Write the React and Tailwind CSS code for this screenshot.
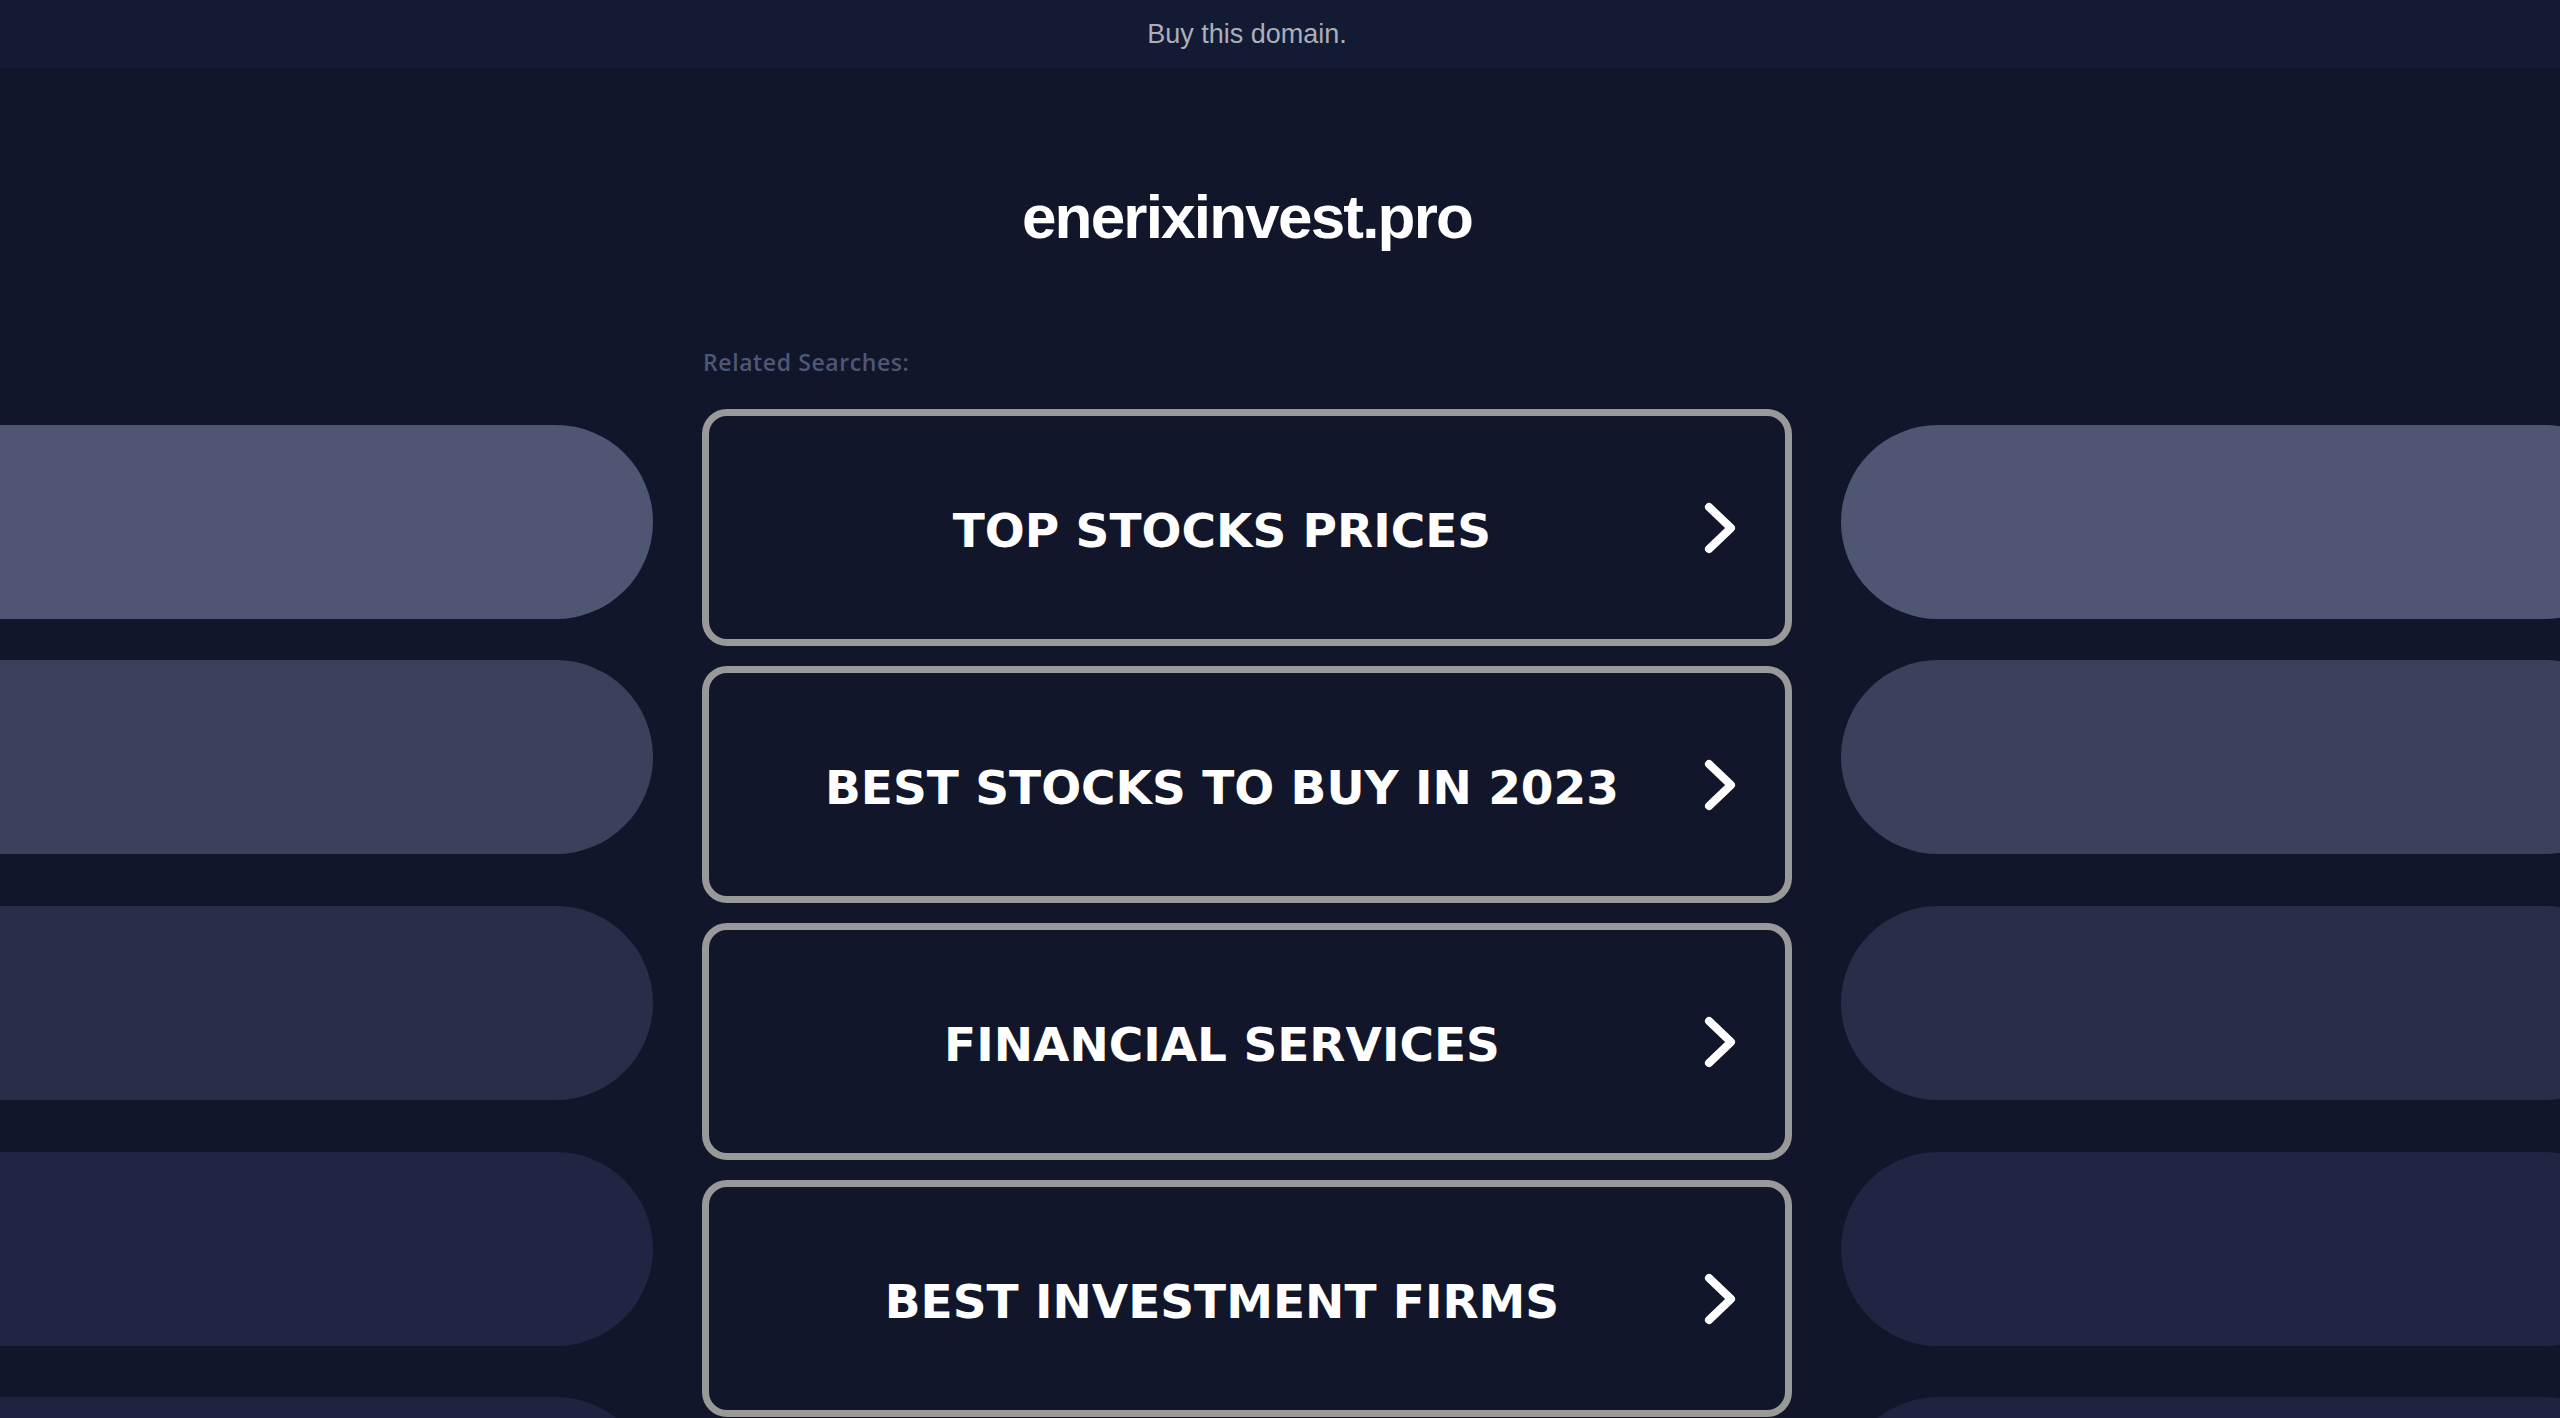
import React from "react";

const searches = [
  "TOP STOCKS PRICES",
  "BEST STOCKS TO BUY IN 2023",
  "FINANCIAL SERVICES",
  "BEST INVESTMENT FIRMS",
];

const pills = [
  { cls: "bg-[#4e5673]", mt: "mt-[74px]" },
  { cls: "bg-[#3b415d]", mt: "mt-[41px]" },
  { cls: "bg-[#282e4a]", mt: "mt-[52px]" },
  { cls: "bg-[#1f2543]", mt: "mt-[52px]" },
  { cls: "bg-[#1d2340]", mt: "mt-[51px]" },
];

function Chevron() {
  return (
    <svg width="32" height="52" viewBox="0 0 32 52" fill="none" className="absolute right-[49px] top-1/2 -translate-y-1/2">
      <path d="M5 5 L27 26 L5 47" stroke="#ffffff" strokeWidth="8" strokeLinecap="round" strokeLinejoin="round" />
    </svg>
  );
}

function PillColumn({ side }) {
  return (
    <div className={`flex flex-col ${side === "left" ? "items-end w-[653px]" : "items-start w-[719px]"} shrink-0`}>
      {pills.map((p, i) => (
        <div key={i} className={`${p.mt} ${p.cls} w-[800px] h-[194px] rounded-full shrink-0`} />
      ))}
    </div>
  );
}

export default function App() {
  return (
    <div className="w-[2560px] h-[1418px] overflow-hidden bg-[#11162a] flex flex-col" style={{ fontFamily: "'Liberation Sans', Arial, sans-serif" }}>
      <div className="h-[68px] shrink-0 bg-[#131b34] flex items-center justify-center pr-[66px] text-[27px] text-[#a9afbb]">
        Buy this domain.
      </div>
      <h1 className="mt-[118px] pr-[66px] text-center text-white font-bold text-[62px] leading-[62px] tracking-[-1.8px]">
        enerixinvest.pro
      </h1>
      <div className="mt-[103px] flex flex-row items-start gap-[49px]">
        <PillColumn side="left" />
        <div className="w-[1090px] shrink-0 flex flex-col">
          <div className="text-[23px] leading-[22px] font-semibold tracking-[0.6px] text-[#4e5777] pl-[1px]" style={{ fontFamily: "'Open Sans', sans-serif" }}>
            Related Searches:
          </div>
          <div className="mt-[36px] flex flex-col gap-[20px]">
            {searches.map((s) => (
              <div key={s} className="relative h-[237px] border-[7px] border-[#999999] rounded-[25px] bg-[#11162a] flex items-center justify-center pr-[50px] pt-[5px]">
                <span className="text-white font-bold text-[47px] leading-none" style={{ fontFamily: "'DejaVu Sans', Verdana, sans-serif" }}>
                  {s}
                </span>
                <Chevron />
              </div>
            ))}
          </div>
        </div>
        <PillColumn side="right" />
      </div>
    </div>
  );
}
